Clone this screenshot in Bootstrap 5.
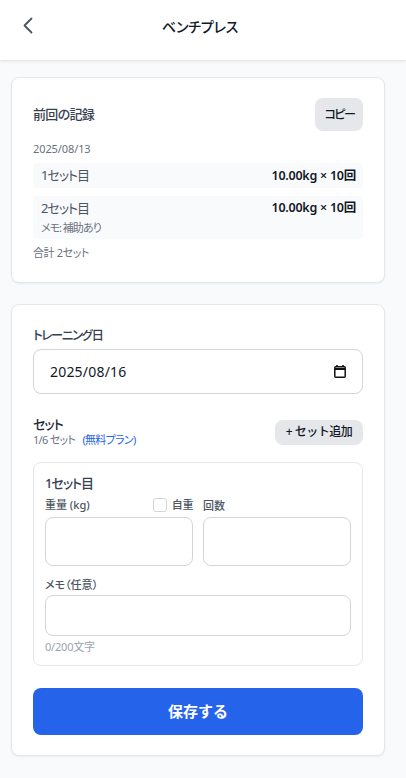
<!doctype html>
<html lang="ja"><head><meta charset="utf-8">
<meta name="viewport" content="width=device-width, initial-scale=1">
<link rel="stylesheet" href="https://cdn.jsdelivr.net/npm/bootstrap@5.3.0/dist/css/bootstrap.min.css">
<style>
html,body{height:100%}
body{background:#f9fafb;font-family:"Noto Sans","Noto Sans CJK JP",sans-serif;font-feature-settings:"palt";color:#111827;font-size:12px;overflow:hidden}
.topbar{height:60px;background:#fff;box-shadow:0 1px 3px rgba(0,0,0,.12);padding:0 22px 6px}
.topbar h1{font-size:14px;font-weight:500;margin:0;color:#111827;letter-spacing:-.2px}
.backlink{width:12px;color:#4b5563;line-height:0;margin-bottom:3px}
.titlewrap{width:332px}
.pagewrap{padding:17px 21px 0 11px}
.panel{background:#fff;border:1px solid #e5e7eb;border-radius:8px;box-shadow:0 1px 2px rgba(0,0,0,.06);padding:20px 21px}
.panel-one{height:206px}
.panel-two{height:452px;margin-top:21px;padding-top:21px}
.panel-title{font-size:13px;color:#374151;font-weight:500;letter-spacing:-.7px}
.btn-soft{background:#e5e7eb;border:0;border-radius:8px;color:#111827;font-size:12px;font-weight:500;padding:0}
.btn-copy{width:48px;height:33px;letter-spacing:-2px}
.btn-add{width:88px;height:25px;letter-spacing:-.5px}
.muted{color:#6b7280;font-size:11px;line-height:16px}
.datetxt{margin-top:10px;height:16px;letter-spacing:-.1px}
.setrow{background:#f9fafb;border-radius:4px;padding:0 7px 0 8px;font-size:13px;color:#4b5563}
.r1{height:25px;line-height:25px;margin-top:6px}
.r2{height:43px;padding-top:2px;line-height:20px;margin-top:8px}
.rowname{letter-spacing:-1px}
.weight{color:#111827;font-weight:600;font-size:12.5px;letter-spacing:-.25px}
.memo-line{font-size:11px;line-height:18px;color:#6b7280;letter-spacing:-1px;margin-top:1px}
.panel-total{margin-top:6px;letter-spacing:-.4px}
.flabel{font-size:12.5px;font-weight:500;color:#374151;line-height:20px;display:block;margin:0;letter-spacing:-1.4px}
.datebox{height:45px;margin-top:3px;border:1px solid #d1d5db;border-radius:8px;padding:0 16px;font-size:14px;letter-spacing:.2px;color:#111827}
.sethead{margin-top:22px;height:32px}
.settitle{font-size:13px;font-weight:500;line-height:16px;color:#1f2937;letter-spacing:-1px}
.setstat{letter-spacing:-.7px}
.plan{color:#2563eb;margin-left:5px}
.setbox{margin-top:14px;height:204px;border:1px solid #e5e7eb;border-radius:8px;padding:11px}
.setname{font-size:13px;font-weight:500;line-height:18px;color:#374151;letter-spacing:-1px}
.tinylabel{font-size:11px;font-weight:500;color:#4b5563;line-height:16px;margin:0}
.labelrow{margin-top:5px;height:16px}
.weightcol{width:148px}
.repscol{width:148px;margin-left:10px}
.check{width:14px;height:14px;border:1px solid #d1d5db;border-radius:3px;margin:0 5px 0 0;background:#fff;flex:none}
.selfw{letter-spacing:-.4px}
.controlrow{margin-top:4px}
.numbox{height:49px;border:1px solid #d1d5db;border-radius:8px;box-shadow:none}
.memobox{height:41px;width:306px;border:1px solid #d1d5db;border-radius:8px;box-shadow:none}
.memolabel{margin-top:11px;margin-bottom:2px}
.counter{font-size:11px;line-height:16px;color:#9ca3af;margin-top:3px;letter-spacing:-.2px}
.btn-save{height:47px;width:330px;margin-top:22px;background:#2563eb;border:0;border-radius:8px;color:#fff;font-size:15px;font-weight:600}
</style></head>
<body>
<header class="topbar d-flex align-items-center">
  <a class="backlink" href="#" aria-label="戻る"><svg width="12" height="17" viewBox="0 0 12 17" fill="none" stroke="currentColor" stroke-width="1.8" stroke-linecap="round" stroke-linejoin="round"><path d="M9.5 1.5 2.5 8.5 9.5 15.5"/></svg></a>
  <div class="titlewrap text-center"><h1>ベンチプレス</h1></div>
</header>
<main class="pagewrap">
  <section class="panel panel-one">
    <div class="d-flex justify-content-between align-items-center">
      <span class="panel-title">前回の記録</span>
      <button class="btn btn-soft btn-copy">コピー</button>
    </div>
    <div class="muted datetxt">2025/08/13</div>
    <div class="setrow r1 d-flex justify-content-between"><span class="rowname">1セット目</span><span class="weight">10.00kg × 10回</span></div>
    <div class="setrow r2">
      <div class="d-flex justify-content-between"><span class="rowname">2セット目</span><span class="weight">10.00kg × 10回</span></div>
      <div class="memo-line">メモ: 補助あり</div>
    </div>
    <div class="muted panel-total">合計 2セット</div>
  </section>
  <section class="panel panel-two">
    <label class="flabel">トレーニング日</label>
    <div class="datebox d-flex justify-content-between align-items-center">
      <span>2025/08/16</span>
      <svg width="12" height="13" viewBox="0 0 12 13" fill="none" stroke="#111" aria-hidden="true"><path d="M3 0v2M9 0v2" stroke-width="1.6"/><rect x=".8" y="1.8" width="10.4" height="10.4" rx="1" stroke-width="1.5"/><path d="M1 4h10" stroke-width="2"/></svg>
    </div>
    <div class="sethead d-flex justify-content-between align-items-center">
      <div>
        <div class="settitle">セット</div>
        <div class="muted setstat">1/6 セット <span class="plan">(無料プラン)</span></div>
      </div>
      <button class="btn btn-soft btn-add">+ セット追加</button>
    </div>
    <div class="setbox">
      <div class="setname">1セット目</div>
      <div class="labelrow d-flex">
        <div class="weightcol d-flex align-items-center justify-content-between">
          <span class="tinylabel">重量 (kg)</span>
          <span class="d-flex align-items-center"><span class="check"></span><span class="tinylabel selfw">自重</span></span>
        </div>
        <div class="repscol"><span class="tinylabel">回数</span></div>
      </div>
      <div class="d-flex controlrow">
        <input class="form-control numbox weightcol" type="text" aria-label="重量">
        <input class="form-control numbox repscol" type="text" aria-label="回数">
      </div>
      <div class="tinylabel memolabel">メモ（任意）</div>
      <input class="form-control memobox" type="text" aria-label="メモ">
      <div class="counter">0/200文字</div>
    </div>
    <button class="btn btn-save d-block">保存する</button>
  </section>
</main>
<script src="https://cdn.jsdelivr.net/npm/bootstrap@5.3.0/dist/js/bootstrap.bundle.min.js"></script>
</body></html>
